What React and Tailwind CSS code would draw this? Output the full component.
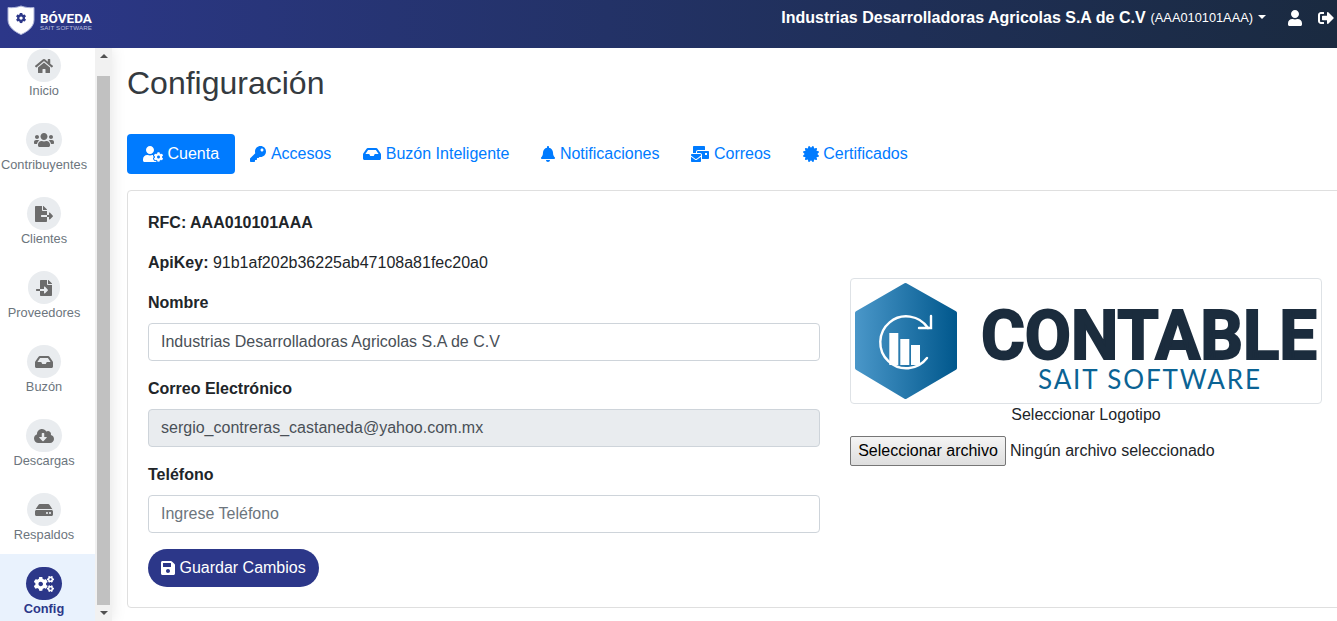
import React from "react";
import { FaHome, FaUsers, FaFileExport, FaFileImport, FaInbox, FaCloudDownloadAlt, FaHdd, FaCogs, FaUserCog, FaKey, FaBell, FaMailBulk, FaCertificate, FaSave, FaUser, FaSignOutAlt } from "react-icons/fa";

const navItems = [
  { label: "Inicio", Icon: FaHome, w: "w-[34px]", iw: "w-[18px]" },
  { label: "Contribuyentes", Icon: FaUsers, w: "w-[36px]", iw: "w-[20px]" },
  { label: "Clientes", Icon: FaFileExport, w: "w-[34px]", iw: "w-[18px]" },
  { label: "Proveedores", Icon: FaFileImport, w: "w-[32px]", iw: "w-[16px]" },
  { label: "Buzón", Icon: FaInbox, w: "w-[34px]", iw: "w-[18px]" },
  { label: "Descargas", Icon: FaCloudDownloadAlt, w: "w-[36px]", iw: "w-[20px]" },
  { label: "Respaldos", Icon: FaHdd, w: "w-[34px]", iw: "w-[18px]" },
];

const tabs = [
  { label: "Accesos", Icon: FaKey, iw: "w-[16px]" },
  { label: "Buzón Inteligente", Icon: FaInbox, iw: "w-[18px]" },
  { label: "Notificaciones", Icon: FaBell, iw: "w-[14px]" },
  { label: "Correos", Icon: FaMailBulk, iw: "w-[18px]" },
  { label: "Certificados", Icon: FaCertificate, iw: "w-[16px]" },
];

function ShieldLogo() {
  return (
    <svg width="28" height="31" viewBox="0 0 28 31" className="shrink-0">
      <path d="M14 2 C18 3.5 23 4 27 3.5 V16 C27 23 20 28 14 30.5 C8 28 1 23 1 16 V3.5 C5 4 10 3.5 14 2 Z" fill="#fff" stroke="#aab1d8" strokeWidth="1" />
      <g transform="translate(8.8 8.8) scale(.0205)">
        <path fill="#2c3789" d="M487.4 315.7l-42.6-24.6c4.3-23.2 4.3-47 0-70.2l42.6-24.6c4.9-2.8 7.1-8.6 5.5-14-11.1-35.6-30-67.8-54.7-94.6-3.8-4.1-10-5.1-14.8-2.3L380.8 110c-17.9-15.4-38.5-27.3-60.8-35.1V25.8c0-5.6-3.9-10.5-9.4-11.7-36.7-8.2-74.3-7.8-109.2 0-5.5 1.2-9.4 6.1-9.4 11.7V75c-22.2 7.9-42.8 19.8-60.8 35.1L88.7 85.5c-4.9-2.8-11-1.9-14.8 2.3-24.7 26.7-43.6 58.9-54.7 94.6-1.7 5.4.6 11.2 5.5 14L67.3 221c-4.3 23.2-4.3 47 0 70.2l-42.6 24.6c-4.9 2.8-7.1 8.6-5.5 14 11.1 35.6 30 67.8 54.7 94.6 3.8 4.1 10 5.1 14.8 2.3l42.6-24.6c17.9 15.4 38.5 27.3 60.8 35.1v49.2c0 5.6 3.9 10.5 9.4 11.7 36.7 8.2 74.3 7.8 109.2 0 5.5-1.2 9.4-6.1 9.4-11.7v-49.2c22.2-7.9 42.8-19.8 60.8-35.1l42.6 24.6c4.9 2.8 11 1.9 14.8-2.3 24.7-26.7 43.6-58.9 54.7-94.6 1.5-5.5-.7-11.3-5.6-14.1zM256 336c-44.1 0-80-35.9-80-80s35.9-80 80-80 80 35.9 80 80-35.9 80-80 80z" />
      </g>
    </svg>
  );
}

function ContableLogo() {
  return (
    <svg viewBox="0 0 470 124" className="w-[470px] h-[124px] block">
      <defs>
        <linearGradient id="hexFill" gradientUnits="userSpaceOnUse" x1="4" x2="105" y1="0" y2="0">
          <stop offset="0" stopColor="#4a97c9" />
          <stop offset="1" stopColor="#01588d" />
        </linearGradient>
      </defs>
      <polygon points="54.5,6 104,34 104,89 54.5,118 6,89 6,34" fill="url(#hexFill)" stroke="url(#hexFill)" strokeWidth="4" strokeLinejoin="round" />
      <path d="M76 79 A26 26 0 1 1 77 49" fill="none" stroke="#fff" strokeWidth="2.4" strokeLinecap="round" />
      <path d="M68 49 H80 V37" fill="none" stroke="#fff" strokeWidth="2.4" strokeLinecap="round" />
      <rect x="38.3" y="54" width="9" height="32" fill="#fff" />
      <rect x="49.3" y="60" width="9" height="26" fill="#fff" />
      <rect x="60" y="66" width="9" height="20" fill="#fff" />
      <text x="130" y="79.5" textLength="336" lengthAdjust="spacingAndGlyphs" fontFamily="Roboto, sans-serif" fontWeight="700" fontSize="68" fill="#1b2c3d" stroke="#1b2c3d" strokeWidth="2">CONTABLE</text>
      <text x="187" y="110" textLength="222" lengthAdjust="spacing" fontFamily="Lato, sans-serif" fontSize="26" fill="#0b6394">SAIT SOFTWARE</text>
    </svg>
  );
}

function Field({ label, className = "", ...props }) {
  return (
    <div className="mb-4">
      <label className="block font-bold mb-2 leading-6 text-[#212529]">{label}</label>
      <input
        {...props}
        className={`block w-full h-[38px] px-3 border border-[#ced4da] rounded text-[#495057] placeholder:text-[#6c757d] outline-none disabled:bg-[#e9ecef] ${className}`}
      />
    </div>
  );
}

export default function App() {
  return (
    <div className="h-[621px] w-[1337px] overflow-hidden flex flex-col bg-white text-base text-[#212529] font-['Liberation_Sans',Arial,sans-serif]">
      <header className="h-12 shrink-0 flex items-start justify-between bg-gradient-to-r from-[#2c3789] to-[#1a2a40] text-white relative z-10">
        <div className="flex items-start gap-[5px] pl-[7px] pt-[4px]">
          <ShieldLogo />
          <div className="flex flex-col mt-[7px]">
            <span className="font-bold text-[13.5px] leading-[14px] font-['Roboto',sans-serif]">BÓVEDA</span>
            <span className="text-[6.2px] leading-[7px] tracking-[0.15px] text-[#b8bedd] -mt-px">SAIT SOFTWARE</span>
          </div>
        </div>
        <div className="flex items-center h-[36px] mr-[3px]">
          <span className="font-bold">Industrias Desarrolladoras Agricolas S.A de C.V</span>
          <span className="text-[12.8px] ml-[5px]">(AAA010101AAA)</span>
          <span className="ml-[5px] w-0 h-0 border-x-[4.8px] border-x-transparent border-t-[4.8px] border-t-white -mt-[3px]" />
          <FaUser className="ml-[22px] w-[14px] h-4" />
          <FaSignOutAlt className="ml-[16px] w-4 h-4" />
        </div>
      </header>

      <div className="flex flex-1 min-h-0">
        <aside className="w-[112px] shrink-0 flex shadow-[0_0_14px_rgba(0,0,0,0.1)] relative">
          <nav className="w-[95px] shrink-0 overflow-hidden">
            <div className="-mt-3">
              {navItems.map(({ label, Icon, w, iw }) => (
                <div key={label} className="h-[74px] w-full pt-[13px] pr-[7px] flex flex-col items-center">
                  <span className={`${w} h-[33px] rounded-full bg-[#e9ecef] flex items-center justify-center text-[#6c6c6c]`}>
                    <Icon className={`${iw} h-4`} />
                  </span>
                  <span className="mt-px text-[12.8px] leading-[16px] text-[#6c757d] whitespace-nowrap">{label}</span>
                </div>
              ))}
              <div className="h-[74px] w-full pt-[13px] pr-[7px] flex flex-col items-center bg-[#e9f2fd]">
                <span className="w-[36px] h-[33px] rounded-full bg-[#2c3789] flex items-center justify-center text-white">
                  <FaCogs className="w-[20px] h-4" />
                </span>
                <span className="mt-px text-[12.8px] leading-[16px] text-[#2c3789] font-bold">Config</span>
              </div>
            </div>
          </nav>
          <div className="w-[17px] shrink-0 bg-[#f1f1f1] flex flex-col items-center">
            <div className="h-[28px] w-full flex items-start justify-center pt-[6px]">
              <span className="w-0 h-0 border-x-[4px] border-x-transparent border-b-[4px] border-b-[#505050]" />
            </div>
            <div className="w-[13px] h-[529px] bg-[#c1c1c1]" />
            <div className="flex-1 w-full flex items-center justify-center">
              <span className="w-0 h-0 border-x-[4px] border-x-transparent border-t-[4px] border-t-[#505050]" />
            </div>
          </div>
        </aside>

        <main className="flex-1 min-w-0 pl-[15px] overflow-hidden">
          <h1 className="text-[32px] leading-[38px] mt-4 mb-[32px] font-normal text-[#343a40]">Configuración</h1>

          <div className="flex mb-4">
            <a className="inline-flex items-center gap-[4.45px] h-10 px-4 -mr-[0.6px] rounded bg-[#007bff] text-white">
              <FaUserCog className="w-[20px] h-4" />
              Cuenta
            </a>
            {tabs.map(({ label, Icon, iw }) => (
              <a key={label} className="inline-flex items-center gap-[4.45px] h-10 px-4 text-[#007bff]">
                <Icon className={`${iw} h-4`} />
                {label}
              </a>
            ))}
          </div>

          <section className="w-[1240px] border border-[#dfdfdf] rounded p-5 flex gap-[30px]">
            <div className="w-[672px] shrink-0">
              <p className="mb-4 leading-6 font-bold">RFC: AAA010101AAA</p>
              <p className="mb-4 leading-6"><b>ApiKey:</b> 91b1af202b36225ab47108a81fec20a0</p>
              <Field label="Nombre" defaultValue="Industrias Desarrolladoras Agricolas S.A de C.V" />
              <Field label="Correo Electrónico" defaultValue="sergio_contreras_castaneda@yahoo.com.mx" disabled />
              <Field label="Teléfono" placeholder="Ingrese Teléfono" />
              <button className="h-[38px] px-[13px] rounded-full bg-[#2c3789] text-white inline-flex items-center gap-[4.45px]">
                <FaSave className="w-[14px] h-4" />
                Guardar Cambios
              </button>
            </div>
            <div className="w-[472px] shrink-0 pt-[67px]">
              <div className="border border-[#dee2e6] rounded">
                <ContableLogo />
              </div>
              <p className="text-center leading-[22px] mb-[10px]">Seleccionar Logotipo</p>
              <div className="flex items-center">
                <button className="h-[30px] w-[156px] border border-[#767676] rounded-[2px] bg-gradient-to-b from-[#f4f4f4] to-[#dedede] text-black whitespace-nowrap">Seleccionar archivo</button>
                <span className="ml-[4px]">Ningún archivo seleccionado</span>
              </div>
            </div>
          </section>
        </main>
      </div>
    </div>
  );
}
